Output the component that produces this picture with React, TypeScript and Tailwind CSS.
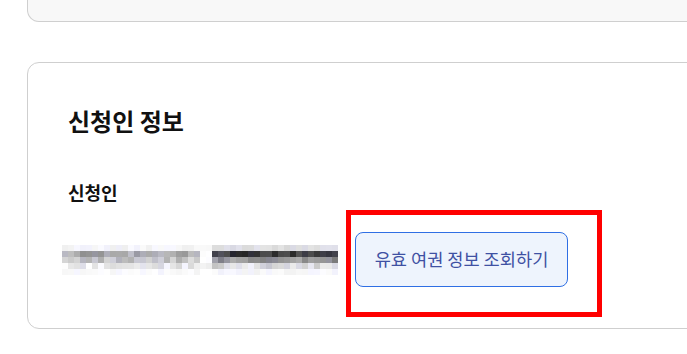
import React from "react";

// masked applicant value, drawn as a pixelated mosaic
const COLS = 46;
const ROWS = 5;

const hash = (n: number) => {
  const x = Math.sin(n * 12.9898 + 78.233) * 43758.5453;
  return x - Math.floor(x);
};

const cellColor = (r: number, c: number) => {
  const light = [244, 168, 196, 234, 249];
  const dark = [222, 58, 148, 220, 246];
  const gap = [252, 240, 242, 250, 253];
  let base: number;
  if (c < 23) base = light[r];
  else if (c < 25) base = gap[r];
  else base = dark[r];
  const jitter = (hash(r * 97 + c * 13) - 0.5) * (r === 0 || r === 4 ? 12 : 50);
  const v = Math.max(0, Math.min(255, Math.round(base + jitter)));
  const tint = hash(c * 7 + r) > 0.6 ? 10 : 0;
  return `rgb(${v}, ${v}, ${Math.min(255, v + tint)})`;
};

const MaskedValue = () => (
  <div className="flex -ml-[6px] w-[276px]">
    {Array.from({ length: COLS }).map((_, c) => (
      <div key={c} className="flex flex-col">
        {Array.from({ length: ROWS }).map((_, r) => (
          <div key={r} className="w-[6px] h-[6px]" style={{ backgroundColor: cellColor(r, c) }} />
        ))}
      </div>
    ))}
  </div>
);

const App = () => {
  return (
    <div className="min-h-screen w-full overflow-hidden bg-white pl-[27px] font-['Noto_Sans_CJK_KR','Noto_Sans',sans-serif]">
      <div className="h-[22px] w-[720px] rounded-b-[12px] border border-t-0 border-[#cfcfcf] bg-[#f8f8f8]" />

      <div className="mt-[40px] w-[720px] rounded-[12px] border border-[#cfcfcf] bg-white px-[40px] pt-[41px] pb-[41px]">
        <h2 className="text-[24px] leading-[33px] font-bold text-[#111111]">신청인 정보</h2>
        <p className="mt-[43px] text-[18px] leading-[24px] font-bold text-[#111111]">신청인</p>
        <div className="mt-[28px] flex items-center">
          <MaskedValue />
          <div className="relative ml-[17px]">
            <button className="h-[55px] w-[213px] rounded-[8px] border border-[#2f6fe4] bg-[#eef4fd] text-[17.6px] text-[#3f51a3]">
              유효 여권 정보 조회하기
            </button>
            <div className="pointer-events-none absolute -left-[9px] -top-[22px] h-[107px] w-[256px] border-[5px] border-[#ff0000]" />
          </div>
        </div>
      </div>
    </div>
  );
};

export default App;
